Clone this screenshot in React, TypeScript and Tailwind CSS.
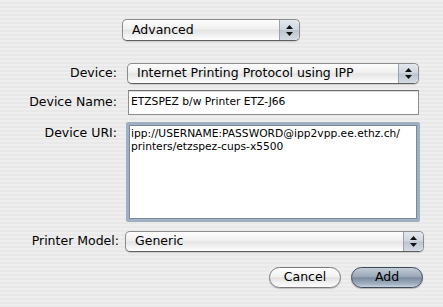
import React from "react";

const font = { fontFamily: '"DejaVu Sans", "Liberation Sans", sans-serif' };

function Stepper() {
  return (
    <div className="flex h-full w-[20px] flex-col items-center justify-center gap-[3px] border-l border-[#9aa3ad] bg-[linear-gradient(to_bottom,#e3e8ee_0%,#cfd6de_48%,#bcc5cf_52%,#d4dbe3_100%)] rounded-r-[5px]">
      <svg width="7" height="4" viewBox="0 0 7 4"><path d="M3.5 0 L7 4 L0 4 Z" fill="#111" /></svg>
      <svg width="7" height="4" viewBox="0 0 7 4"><path d="M0 0 L7 0 L3.5 4 Z" fill="#111" /></svg>
    </div>
  );
}

function Popup({ label, className }: { label: string; className: string }) {
  return (
    <div
      className={`flex items-stretch rounded-[5px] border border-[#8c8c8c] border-b-[#5f5f5f] bg-[linear-gradient(to_bottom,#fdfdfd_0%,#f0f0f0_45%,#e4e4e4_52%,#f3f3f3_80%,#ffffff_100%)] shadow-[0_1px_1px_rgba(0,0,0,0.15)] ${className}`}
    >
      <div className="flex flex-1 items-center pl-[9px] text-[12.5px] leading-none text-black">{label}</div>
      <Stepper />
    </div>
  );
}

export default function App() {
  return (
    <div
      style={font}
      className="relative h-[307px] w-[443px] overflow-hidden bg-[repeating-linear-gradient(to_bottom,#eeeeee_0px,#eeeeee_2px,#e8e8e8_2px,#e8e8e8_4px)] text-black"
    >
      <div className="flex flex-col">
        <div className="pl-[122px] pt-[19px]">
          <Popup label="Advanced" className="h-[22px] w-[178px]" />
        </div>

        <div className="mt-[22px] flex items-center">
          <div className="w-[117px] text-right text-[12.5px] leading-none">Device:</div>
          <Popup label="Internet Printing Protocol using IPP" className="ml-[10px] h-[21px] w-[292px]" />
        </div>

        <div className="mt-[6px] flex items-center">
          <div className="w-[117px] text-right text-[12.5px] leading-none">Device Name:</div>
          <div className="ml-[11px] flex h-[25px] w-[291px] items-center border border-[#8e8e8e] border-t-[#6d6d6d] bg-white pl-[2px] text-[10.7px] leading-none shadow-[inset_0_1px_1px_rgba(0,0,0,0.15)]">
            ETZSPEZ b/w Printer ETZ-J66
          </div>
        </div>

        <div className="mt-[7px] flex items-start">
          <div className="w-[117px] pt-[5px] text-right text-[12.5px] leading-none">Device URI:</div>
          <div className="ml-[9px] h-[100px] w-[294px] rounded-[2px] border-[3px] border-[#9eb0c4] bg-white">
            <div className="h-full w-full border border-[#7d8998] px-[1px] pt-[1px] text-[10.7px] leading-[13px]">
              ipp://USERNAME:PASSWORD@ipp2vpp.ee.ethz.ch/
              <br />
              printers/etzspez-cups-x5500
            </div>
          </div>
        </div>

        <div className="mt-[9px] flex items-center">
          <div className="w-[119px] text-right text-[12.5px] leading-none">Printer Model:</div>
          <Popup label="Generic" className="ml-[6px] h-[21px] w-[299px]" />
        </div>

        <div className="mt-[15px] flex justify-end gap-[10px] pr-[20px]">
          <button className="flex h-[21px] w-[72px] items-center justify-center rounded-full border border-[#7a7a7a] bg-[linear-gradient(to_bottom,#ffffff_0%,#f2f2f2_45%,#e2e2e2_52%,#f5f5f5_85%,#ffffff_100%)] text-[12.5px] leading-none shadow-[0_1px_1px_rgba(0,0,0,0.2)]">
            Cancel
          </button>
          <button className="flex h-[21px] w-[72px] items-center justify-center rounded-full border border-[#3f4a58] bg-[linear-gradient(to_bottom,#c3ccd7_0%,#9aa8b8_45%,#7b8ba0_52%,#a3b2c3_85%,#c9d3de_100%)] text-[12.5px] leading-none shadow-[0_1px_1px_rgba(0,0,0,0.25)]">
            Add
          </button>
        </div>
      </div>
    </div>
  );
}
